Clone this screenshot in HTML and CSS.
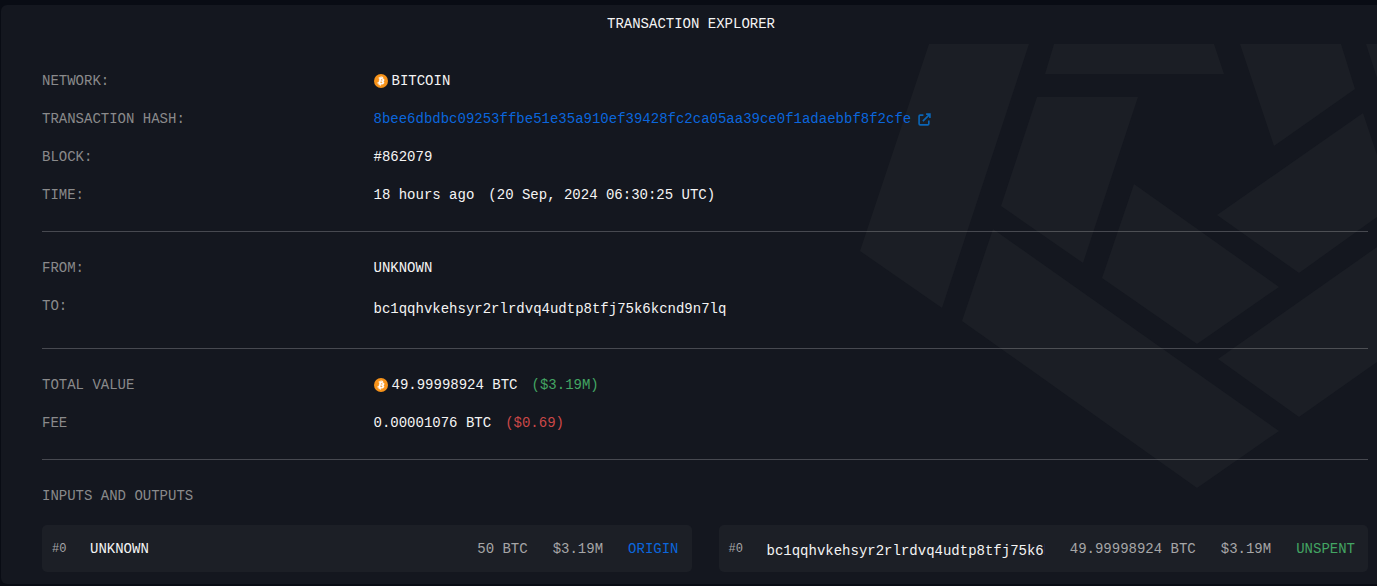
FILE: index.html
```html
<!DOCTYPE html>
<html lang="en">
<head>
  <meta charset="UTF-8">
  <meta name="viewport" content="width=device-width, initial-scale=1">
  <title>Transaction Explorer</title>
  <link rel="stylesheet" href="styles.css">
</head>
<body>
  <!-- Shared coin icon -->
  <svg class="sprite" aria-hidden="true">
    <symbol id="btc" viewBox="0 0 32 32">
      <circle cx="16" cy="16" r="16" fill="#f7931a"/>
      <path fill="#fff" stroke="#fff" fill-rule="evenodd" d="M23.2 14.02c.31-2.1-1.29-3.23-3.48-3.98l.71-2.85-1.73-.43-.69 2.77-1.39-.33.7-2.79-1.74-.43-.71 2.84-3.49-.87-.46 1.85s1.29.3 1.26.31c.7.18.83.64.81 1.01l-1.95 7.85c-.09.21-.3.54-.8.42.02.02-1.26-.32-1.26-.32l-.86 2 3.47.86-.72 2.88 1.73.43.71-2.85 1.38.36-.71 2.84 1.73.43.72-2.88c2.96.56 5.18.34 6.12-2.34.75-2.15-.04-3.4-1.6-4.21 1.14-.26 2-1.01 2.23-2.57zm-3.97 5.57c-.53 2.15-4.16.99-5.34.69l.95-3.82c1.18.3 4.95.88 4.39 3.13zm.54-5.6c-.49 1.96-3.51.96-4.49.72l.87-3.47c.98.25 4.13.7 3.62 2.75z"/>
    </symbol>
  </svg>

  <main class="panel">
    <svg class="watermark" viewBox="0 0 520 448" aria-hidden="true">
      <path d="M72 0H172L85 264L3 207Z"/>
      <path d="M197 0H357L367 30H188Z"/>
      <path d="M383 0H484L498 45L417 102Z"/>
      <path d="M509 0H520V34Z"/>
      <path d="M180 53H281L226 219L144 162Z"/>
      <path d="M277 140L422 243L340 300L245 234Z"/>
      <path d="M506 69L520 111V173L442 229L360 171Z"/>
      <path d="M136 185L422 387L340 444L105 277Z"/>
      <path d="M520 203V318L442 373L361 315Z"/>
    </svg>

    <h1>TRANSACTION EXPLORER</h1>

    <div class="content">
      <dl class="section">
        <div class="row">
          <dt>NETWORK:</dt>
          <dd><svg class="coin"><use href="#btc"/></svg>BITCOIN</dd>
        </div>
        <div class="row">
          <dt>TRANSACTION HASH:</dt>
          <dd>
            <a class="hash" href="#">8bee6dbdbc09253ffbe51e35a910ef39428fc2ca05aa39ce0f1adaebbf8f2cfe
              <svg class="external" viewBox="0 0 24 24" aria-hidden="true"><path d="M10 4H4Q2 4 2 6V20Q2 22 4 22H18Q20 22 20 20V14M15 2H22V9M22 2L9 15"/></svg>
            </a>
          </dd>
        </div>
        <div class="row">
          <dt>BLOCK:</dt>
          <dd>#862079</dd>
        </div>
        <div class="row">
          <dt>TIME:</dt>
          <dd>18 hours ago <span class="extra">(20 Sep, 2024 06:30:25 UTC)</span></dd>
        </div>
      </dl>

      <dl class="section">
        <div class="row">
          <dt>FROM:</dt>
          <dd>UNKNOWN</dd>
        </div>
        <div class="row">
          <dt>TO:</dt>
          <dd class="to">bc1qqhvkehsyr2rlrdvq4udtp8tfj75k6kcnd9n7lq</dd>
        </div>
      </dl>

      <dl class="section">
        <div class="row">
          <dt>TOTAL VALUE</dt>
          <dd><svg class="coin"><use href="#btc"/></svg>49.99998924 BTC <span class="extra green">($3.19M)</span></dd>
        </div>
        <div class="row">
          <dt>FEE</dt>
          <dd>0.00001076 BTC <span class="extra red">($0.69)</span></dd>
        </div>
      </dl>

      <section class="transfers">
        <h2>INPUTS AND OUTPUTS</h2>
        <div class="cards">
          <div class="card">
            <span class="index">#0</span>
            <span class="name">UNKNOWN</span>
            <span>50 BTC</span>
            <span>$3.19M</span>
            <a href="#">ORIGIN</a>
          </div>
          <div class="card">
            <span class="index">#0</span>
            <span class="name address">bc1qqhvkehsyr2rlrdvq4udtp8tfj75k6kcnd9n7lq</span>
            <span>49.99998924 BTC</span>
            <span>$3.19M</span>
            <span class="green">UNSPENT</span>
          </div>
        </div>
      </section>
    </div>
  </main>
</body>
</html>
```
FILE: styles.css
```css
* {
  box-sizing: border-box;
}
body {
  margin: 0;
  padding: 5px 0 1px 1px;
  background-color: #090c14;
  color: #f4f4f4;
  font-family: "Liberation Mono", monospace;
  font-size: 14px;
  line-height: 38px;
}
h1, h2, dl, dd {
  margin: 0;
}
h1, h2 {
  font-size: 14px;
  font-weight: normal;
}
a {
  color: #0b66dc;
  text-decoration: none;
}
.sprite {
  position: absolute;
  width: 0;
  height: 0;
}

/* Panel */
.panel {
  position: relative;
  overflow: hidden;
  padding-bottom: 12px;
  background-color: #14171f;
  border-radius: 6px 0 0 6px;
}
.panel h1 {
  padding-left: 4px;
  text-align: center;
}
.watermark {
  position: absolute;
  top: 39px;
  right: 0;
  width: 520px;
  height: 448px;
  fill: #1b1e25;
}
.content {
  position: relative;
  padding: 19px 9px 0 41px;
}

/* Detail rows */
.section {
  padding-bottom: 17px;
  margin-bottom: 17px;
  border-bottom: 1px solid rgba(255, 255, 255, 0.22);
}
.row {
  display: grid;
  grid-template-columns: 1fr 3fr;
}
dt, h2 {
  color: #8a8a8b;
}
dd {
  display: flex;
  align-items: center;
  min-width: 0;
}
.to {
  line-height: 44px;
}
.extra {
  margin-left: 14px;
}
.coin {
  width: 14px;
  height: 14px;
  margin-right: 4px;
}
.hash {
  display: flex;
  align-items: center;
  gap: 7px;
}
.external {
  width: 13px;
  height: 13px;
  fill: none;
  stroke: #0b66b8;
  stroke-width: 3px;
}
.green {
  color: #43a563;
}
.red {
  color: #cb4848;
}

/* Inputs and outputs */
.cards {
  display: grid;
  grid-template-columns: 1fr 1fr;
  gap: 27px;
  margin-top: 10px;
}
.card {
  display: flex;
  align-items: center;
  gap: 25px;
  min-width: 0;
  height: 47px;
  padding: 0 13px 0 10px;
  background-color: #1c1f26;
  border-radius: 5px;
  color: #a6a6a6;
  white-space: nowrap;
}
.index {
  width: 13px;
  font-size: 12px;
}
.name {
  flex: 1;
  overflow: hidden;
  color: #f4f4f4;
}
.address {
  padding-top: 4px;
}
```
